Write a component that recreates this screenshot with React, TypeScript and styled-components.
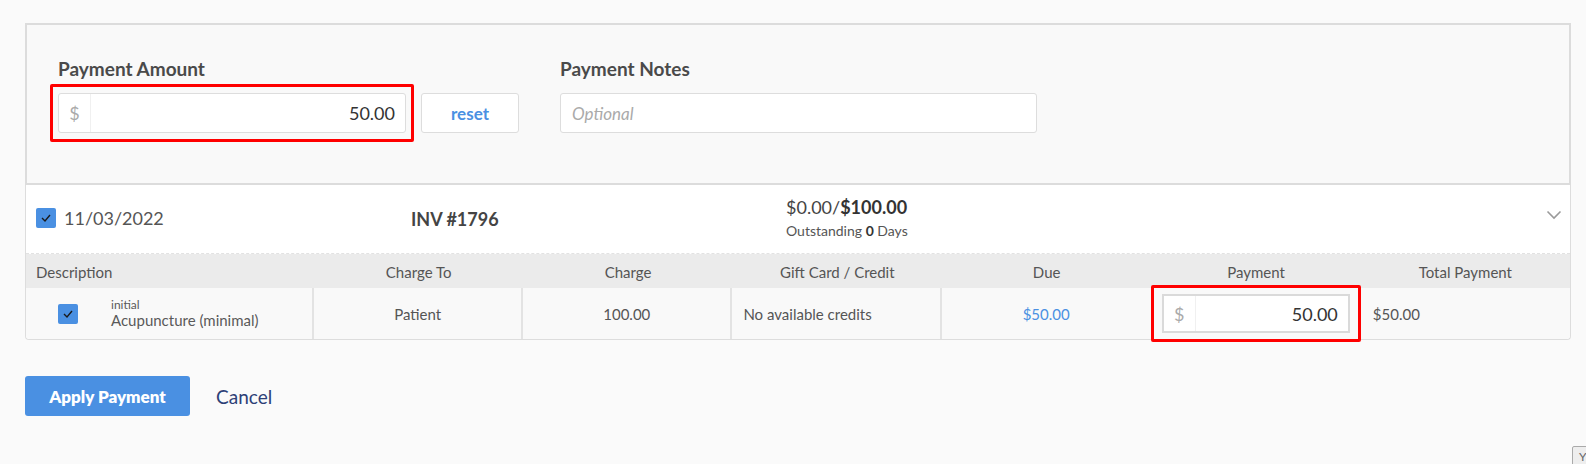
import React from 'react';
import styled, { createGlobalStyle } from 'styled-components';

const GlobalStyle = createGlobalStyle`
    html, body {
        margin: 0;
        padding: 0;
        background: #fafafa;
    }
    body {
        font-family: Lato, 'Open Sans', Arial, sans-serif;
        color: #4a4a4a;
    }
    * {
        box-sizing: border-box;
    }
`;

const BLUE = '#4a90e2';

const Page = styled.div`
    width: 1586px;
    min-height: 464px;
    padding: 23px 15px 0 25px;
`;

// top part: amount + notes
const AmountPanel = styled.div`
    background: #f9f9f9;
    border: 2px solid #dcdcdc;
    padding: 33px 31px 50px;
    display: flex;
    align-items: flex-end;
`;

const Field = styled.div`
    display: flex;
    flex-direction: column;
`;

const Label = styled.label`
    font-size: 19px;
    font-weight: 700;
    line-height: 22px;
    color: #4a4a4a;
    margin-bottom: 13px;
`;

const Highlight = styled.div<{ $vpad: number; $hpad: number; $inCell?: boolean }>`
    border: 3px solid #ff0000;
    border-radius: 2px;
    padding: ${(p) => p.$vpad}px ${(p) => p.$hpad}px;
    margin: ${(p) => (p.$inCell ? '-3px 0' : `${-(p.$vpad + 3)}px ${-(p.$hpad + 3)}px`)};
    position: relative;
    z-index: 1;
`;

const MoneyInput = styled.div<{ $width: number; $thick?: boolean }>`
    width: ${(p) => p.$width}px;
    height: ${(p) => (p.$thick ? 39 : 40)}px;
    display: flex;
    align-items: center;
    background: #fff;
    border: ${(p) => (p.$thick ? '2px solid #dadada' : '1px solid #dddddd')};
    border-radius: ${(p) => (p.$thick ? 0 : 3)}px;
`;

const Addon = styled.span`
    width: 32px;
    align-self: stretch;
    display: flex;
    align-items: center;
    justify-content: center;
    border-right: 1px solid #f0f0f0;
    color: #aaa;
    font-size: 18px;
`;

const Value = styled.span`
    flex: 1;
    text-align: right;
    padding-right: 10px;
    font-size: 18px;
    color: #333;
`;

const ResetButton = styled.button`
    width: 98px;
    height: 40px;
    margin-left: 15px;
    background: #fff;
    border: 1px solid #dddddd;
    border-radius: 3px;
    color: ${BLUE};
    font-family: inherit;
    font-size: 17px;
    font-weight: 700;
`;

const NotesField = styled(Field)`
    margin-left: 41px;
`;

const NotesInput = styled.div`
    width: 477px;
    height: 40px;
    background: #fff;
    border: 1px solid #dddddd;
    border-radius: 3px;
    padding-left: 11px;
    display: flex;
    align-items: center;
    font-size: 17px;
    font-style: italic;
    color: #aaa;
`;

// invoice card
const Card = styled.div`
    background: #fff;
    border: 1px solid #dddddd;
    border-top: none;
    border-radius: 0 0 4px 4px;
`;

const CardHeader = styled.div`
    height: 69px;
    display: grid;
    grid-template-columns: 375px 375px 1fr auto;
    align-items: center;
    padding: 0 8px 4px 10px;
    border-bottom: 1px dashed #e2e2e2;
`;

const DateCell = styled.div`
    display: flex;
    align-items: center;
    gap: 8px;
    font-size: 18px;
    color: #555;
    padding-top: 1px;
`;

const InvNumber = styled.div`
    font-size: 18px;
    font-weight: 700;
    color: #444;
    padding-top: 3px;
`;

const Totals = styled.div`
    display: flex;
    flex-direction: column;
    gap: 4px;
    color: #444;
`;

const TotalLine = styled.div`
    font-size: 18px;
    b {
        font-weight: 700;
        color: #333;
    }
`;

const Outstanding = styled.div`
    font-size: 14px;
    color: #555;
    b {
        font-weight: 700;
        color: #333;
    }
`;

const Chevron = styled.div`
    display: flex;
    padding-bottom: 4px;
`;

const Box = styled.span<{ $checked?: boolean }>`
    width: 20px;
    height: 20px;
    flex: none;
    border-radius: 2px;
    background: ${(p) => (p.$checked ? BLUE : '#fff')};
    display: inline-flex;
    align-items: center;
    justify-content: center;
`;

const Grid = styled.div<{ $header?: boolean }>`
    display: grid;
    grid-template-columns: 288px repeat(6, 1fr);
    height: ${(p) => (p.$header ? 34 : 51)}px;
    background: ${(p) => (p.$header ? '#ebebeb' : '#f9f9f9')};
    font-size: 15px;
    color: #555;
    border-radius: ${(p) => (p.$header ? 0 : '0 0 4px 4px')};
`;

const HeadCell = styled.div<{ $left?: boolean }>`
    display: flex;
    align-items: center;
    justify-content: ${(p) => (p.$left ? 'flex-start' : 'center')};
    padding-left: ${(p) => (p.$left ? 10 : 0)}px;
    padding-top: 2px;
`;

const Cell = styled.div<{ $align?: 'left' | 'center'; $divider?: boolean; $pad?: number }>`
    display: flex;
    align-items: center;
    justify-content: ${(p) => (p.$align === 'left' ? 'flex-start' : 'center')};
    padding-left: ${(p) => p.$pad ?? 0}px;
    border-right: ${(p) => (p.$divider ? '2px solid #e3e3e3' : 'none')};
`;

const DescCell = styled(Cell)`
    gap: 33px;
`;

const Desc = styled.div`
    display: flex;
    flex-direction: column;
    line-height: 17px;
    color: #5a5a5a;
    small {
        font-size: 12px;
        line-height: 14px;
    }
`;

const Link = styled.span`
    color: ${BLUE};
`;

const Actions = styled.div`
    display: flex;
    align-items: center;
    gap: 26px;
    margin-top: 36px;
`;

const PrimaryButton = styled.button`
    width: 165px;
    height: 40px;
    border: none;
    border-radius: 3px;
    background: ${BLUE};
    color: #fff;
    font-family: inherit;
    font-size: 17px;
    font-weight: 800;
`;

const CancelLink = styled.span`
    font-size: 19px;
    color: #2d3f77;
`;

const CornerWidget = styled.div`
    position: fixed;
    left: 1572px;
    top: 446px;
    width: 30px;
    height: 30px;
    background: #eee;
    border: 1px solid #aaa;
    border-radius: 2px;
    font-size: 12px;
    color: #666;
    padding: 2px 0 0 6px;
`;

const Check = () => (
    <Box $checked>
        <svg width="12" height="10" viewBox="0 0 12 10">
            <polyline points="2,5 5,8 10,2" fill="none" stroke="#1a1a1a" strokeWidth="1.4" />
        </svg>
    </Box>
);

const columns = ['Charge To', 'Charge', 'Gift Card / Credit', 'Due', 'Payment', 'Total Payment'];

export default function App() {
    return (
        <>
            <GlobalStyle />
            <Page>
                <AmountPanel>
                    <Field>
                        <Label>Payment Amount</Label>
                        <Highlight $vpad={6} $hpad={5}>
                            <MoneyInput $width={348}>
                                <Addon>$</Addon>
                                <Value>50.00</Value>
                            </MoneyInput>
                        </Highlight>
                    </Field>
                    <ResetButton>reset</ResetButton>
                    <NotesField>
                        <Label>Payment Notes</Label>
                        <NotesInput>Optional</NotesInput>
                    </NotesField>
                </AmountPanel>

                <Card>
                    <CardHeader>
                        <DateCell>
                            <Check />
                            11/03/2022
                        </DateCell>
                        <InvNumber>INV #1796</InvNumber>
                        <Totals>
                            <TotalLine>
                                $0.00/<b>$100.00</b>
                            </TotalLine>
                            <Outstanding>
                                Outstanding <b>0</b> Days
                            </Outstanding>
                        </Totals>
                        <Chevron>
                            <svg width="16" height="10" viewBox="0 0 16 10">
                                <polyline points="1.5,1.5 8,8 14.5,1.5" fill="none" stroke="#9a9a9a" strokeWidth="1.6" />
                            </svg>
                        </Chevron>
                    </CardHeader>

                    <Grid $header>
                        <HeadCell $left>Description</HeadCell>
                        {columns.map((c) => (
                            <HeadCell key={c}>{c}</HeadCell>
                        ))}
                    </Grid>
                    <Grid>
                        <DescCell $align="left" $pad={32} $divider>
                            <Check />
                            <Desc>
                                <small>initial</small>
                                Acupuncture (minimal)
                            </Desc>
                        </DescCell>
                        <Cell $divider>Patient</Cell>
                        <Cell $divider>100.00</Cell>
                        <Cell $align="left" $pad={11} $divider>
                            No available credits
                        </Cell>
                        <Cell>
                            <Link>$50.00</Link>
                        </Cell>
                        <Cell>
                            <Highlight $vpad={6} $hpad={8} $inCell>
                                <MoneyInput $width={188} $thick>
                                    <Addon>$</Addon>
                                    <Value>50.00</Value>
                                </MoneyInput>
                            </Highlight>
                        </Cell>
                        <Cell $align="left" $pad={12}>
                            $50.00
                        </Cell>
                    </Grid>
                </Card>

                <Actions>
                    <PrimaryButton>Apply Payment</PrimaryButton>
                    <CancelLink>Cancel</CancelLink>
                </Actions>
            </Page>
            <CornerWidget>Y</CornerWidget>
        </>
    );
}
